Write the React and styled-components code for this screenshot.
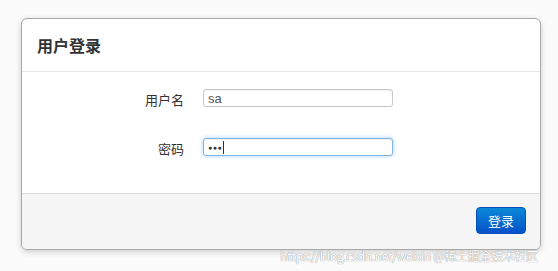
import React from "react";
import styled, { createGlobalStyle } from "styled-components";

const Global = createGlobalStyle`
  html, body { margin: 0; padding: 0; background: #ffffff; }
  body { font-family: "Liberation Sans", "Noto Sans CJK SC", sans-serif; }
`;

const Page = styled.div`
  position: relative;
  width: 558px;
  height: 271px;
  padding: 18px 0 0 21px;
  box-sizing: border-box;
  background: #fbfbfc;
`;

const Modal = styled.div`
  width: 520px;
  height: 232px;
  box-sizing: border-box;
  border: 1px solid #a8a8a8;
  border-radius: 6px;
  background: #fff;
  box-shadow: 0 2px 6px rgba(0, 0, 0, 0.18);
  display: flex;
  flex-direction: column;
  overflow: hidden;
`;

const Header = styled.div`
  height: 53px;
  box-sizing: border-box;
  border-bottom: 1px solid #e8e8e8;
  display: flex;
  align-items: center;
  padding: 0 15px;
`;

const Title = styled.h3`
  margin: 0;
  font-family: "Noto Sans CJK SC", sans-serif;
  font-size: 16px;
  font-weight: 700;
  color: #333;
`;

const Body = styled.div`
  flex: 1;
  display: flex;
  flex-direction: column;
  gap: 27px;
  padding: 15px 0 0;
`;

const Row = styled.div`
  display: grid;
  grid-template-columns: 162px 190px;
  column-gap: 19px;
  align-items: center;
`;

const Label = styled.label`
  text-align: right;
  font-family: "Noto Sans CJK SC", sans-serif;
  font-size: 13px;
  color: #333;
  padding-top: 3px;
`;

const Input = styled.div`
  height: 18px;
  box-sizing: border-box;
  border: 1px solid ${(p) => (p.$focused ? "#7fb4e4" : "#c8c8c8")};
  border-radius: 3px;
  background: #fff;
  box-shadow: ${(p) =>
    p.$focused
      ? "inset 0 1px 1px rgba(0,0,0,0.06), 0 0 4px rgba(82,168,236,0.55)"
      : "inset 0 1px 1px rgba(0,0,0,0.06)"};
  display: flex;
  align-items: center;
  padding: 0 4px;
  font-family: "Liberation Sans", sans-serif;
  font-size: 13px;
  color: #555;
`;

const Dots = styled.span`
  font-size: 7px;
  letter-spacing: 0.5px;
  color: #333;
`;

const Caret = styled.span`
  display: inline-block;
  width: 1px;
  height: 13px;
  background: #333;
  margin-left: 1px;
`;

const Footer = styled.div`
  height: 56px;
  box-sizing: border-box;
  border-top: 1px solid #dcdcdc;
  background: #f5f5f5;
  display: flex;
  align-items: center;
  justify-content: flex-end;
  padding: 0 14px 0 0;
`;

const Button = styled.button`
  width: 50px;
  height: 27px;
  border: 1px solid #0050b8;
  border-radius: 4px;
  background: linear-gradient(#0a89d8, #0551c8);
  color: #fff;
  font-family: "Noto Sans CJK SC", sans-serif;
  font-size: 13px;
  padding: 0;
  margin-bottom: 2px;
`;

const Watermark = styled.div`
  position: absolute;
  right: 20px;
  bottom: 7px;
  font-family: "Noto Sans CJK SC", sans-serif;
  font-size: 12px;
  color: #fff;
  white-space: nowrap;
  text-shadow: 0 0 1px #9a9a9a, 0 0 1px #9a9a9a;
  letter-spacing: -0.3px;
`;

export default function App() {
  return (
    <>
      <Global />
      <Page>
        <Modal>
          <Header>
            <Title>用户登录</Title>
          </Header>
          <Body>
            <Row>
              <Label>用户名</Label>
              <Input>sa</Input>
            </Row>
            <Row>
              <Label>密码</Label>
              <Input $focused>
                <Dots>●●●</Dots>
                <Caret />
              </Input>
            </Row>
          </Body>
          <Footer>
            <Button>登录</Button>
          </Footer>
        </Modal>
        <Watermark>https://blog.csdn.net/weixin @稀土掘金技术社区</Watermark>
      </Page>
    </>
  );
}
